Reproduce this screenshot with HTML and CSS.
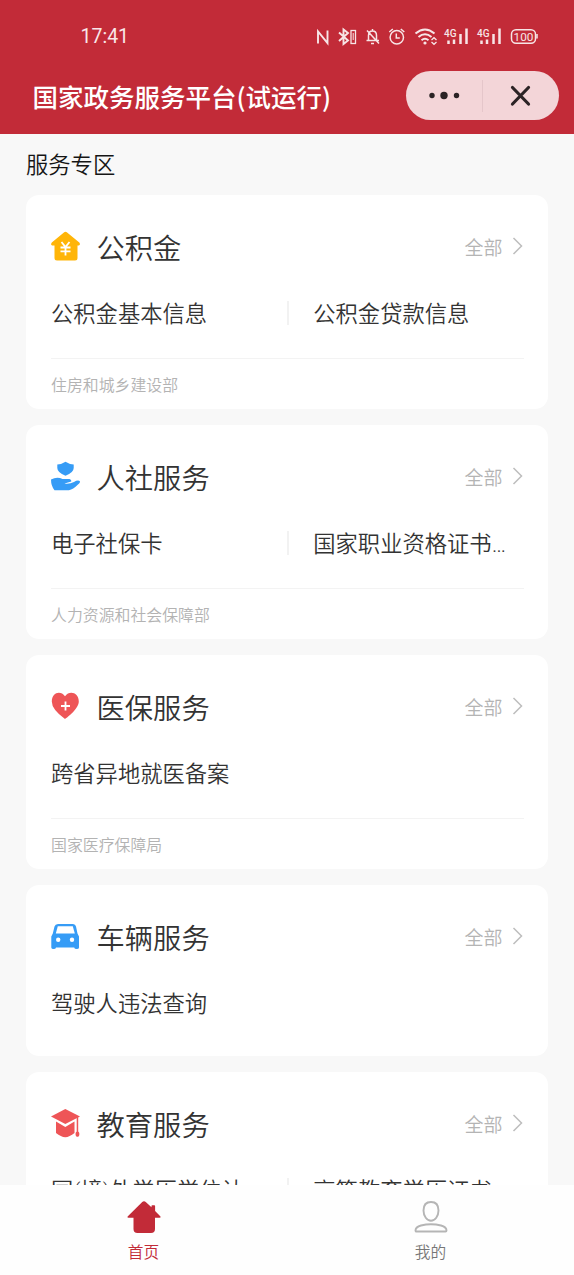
FILE: index.html
```html
<!DOCTYPE html>
<html lang="zh-CN">
<head>
<meta charset="utf-8">
<title>国家政务服务平台</title>
<link rel="stylesheet" href="styles.css">
</head>
<body>
<div class="app">
  <header class="top">
    <div class="status">
      <span class="clock">17:41</span>
      <svg class="status-icons" width="226" height="24" viewBox="314 24 226 24" fill="none" stroke="#fff" stroke-width="1.500">
        <path d="M318 43.500V31.500L327.500 43V30.500" stroke-width="1.900"/>
        <path d="M339 32.500l9 8-4.500 3.500V29.500l4.500 3.500-9 8" stroke-width="1.900"/>
        <rect x="351" y="30.500" width="4.500" height="13" stroke-width="1.300"/><path d="M353.200 33v7" stroke-width="1"/>
        <path d="M366.500 40.500h12.500M368.500 40v-4.500c0-3 2-4.500 4-4.500s4 1.500 4 4.500V40M372.500 29v2M371 43.500h3M367 30.500l12 13"/>
        <circle cx="396.800" cy="37.300" r="6.700"/><path d="M396.300 33.500v4.500h3.500M389.300 32l3.500-3M404.300 32l-3.500-3"/>
        <path d="M415.500 33.500q9.500-8 19 0M418.500 37q6.500-5.500 13 0M421.500 40.200q3.500-3 7 0" stroke-width="2"/>
        <circle cx="425" cy="43" r="1.600" fill="#fff" stroke="none"/>
        <path d="M431.500 40l2.500-2.300 2.500 2.300M431.500 42l2.500 2.300 2.500-2.300" stroke-width="1.300"/>
        <path d="M448.500 40.500V44M454 39.500V44M460.500 34V44M466.500 28.500V44M481.500 40.500V44M487 39.500V44M493.500 34V44M499.500 28.500V44" stroke-width="2.500"/>
        <rect x="511.500" y="29.700" width="24" height="13.500" rx="4.500"/><path d="M537 34v4.500" stroke-width="1.500"/>
        <g class="status-text"><text x="444" y="36.500" font-size="10" font-weight="500">4G</text><text x="477" y="36.500" font-size="10" font-weight="500">4G</text><text x="513.600" y="40.500" font-size="11.800" font-weight="400">100</text></g>
      </svg>
    </div>
    <div class="titlebar">
      <h1>国家政务服务平台(试运行)</h1>
      <div class="capsule">
        <svg width="76" height="48" viewBox="0 0 76 48" fill="#2b2325"><circle cx="26" cy="23.500" r="2.700"/><circle cx="38" cy="23.500" r="3.700"/><circle cx="50.500" cy="23.500" r="2.700"/></svg>
        <i class="capsule-line"></i>
        <svg width="75" height="48" viewBox="0 0 75 48" stroke="#2b2325" stroke-width="3.200" stroke-linecap="round"><path d="M29.500 15.500l16 16.500M45.500 15.500l-16 16.500"/></svg>
      </div>
    </div>
  </header>

  <main class="content">
    <h2 class="section">服务专区</h2>

    <section class="card">
      <div class="head">
        <svg class="icon" width="30" height="32" viewBox="0 0 30 32"><path d="M13.200 1.200q1.300-1.100 2.600 0L28.300 11.600q1.500 2.200-.6 3H26.500V27q0 2.500-2.500 2.500H6Q3.500 29.500 3.500 27V14.600H1.200Q-.8 13.600.8 11.500z" fill="#ffb508"/><path d="M10.500 11l4 5 4-5M14.500 16v8.500M9.500 16.500h10M9.500 20.300h10" fill="none" stroke="#fff" stroke-width="1.800"/></svg>
        <h3>公积金</h3><span class="all">全部</span><svg class="arrow" width="11" height="18" viewBox="0 0 11 18"><path d="M1.500 1l8 8-8 8"/></svg>
      </div>
      <div class="items"><span>公积金基本信息</span><span>公积金贷款信息</span></div>
      <div class="source">住房和城乡建设部</div>
    </section>

    <section class="card">
      <div class="head">
        <svg class="icon" width="30" height="32" viewBox="0 0 30 32" fill="#369cf6"><path d="M14.500.8Q18.500 3.500 22.700 3.500V7q0 4.500-8.200 7.800Q6.300 11.500 6.300 7V3.500Q10.500 3.500 14.500.8z"/><path d="M0 18.500Q6 15.500 11.500 18H18.500q2.200.6 1.800 2.500L13.500 22.500q5 .8 9.500-1.600 3.500-2 5.700-1Q29.800 21.200 27 23.500 22 28.500 18 29.200H3.500Q0 25 0 18.500z"/></svg>
        <h3>人社服务</h3><span class="all">全部</span><svg class="arrow" width="11" height="18" viewBox="0 0 11 18"><path d="M1.500 1l8 8-8 8"/></svg>
      </div>
      <div class="items"><span>电子社保卡</span><span>国家职业资格证书查询</span></div>
      <div class="source">人力资源和社会保障部</div>
    </section>

    <section class="card">
      <div class="head">
        <svg class="icon" width="30" height="32" viewBox="0 0 30 32"><path d="M14 28Q.8 18.500.8 10.500C.8 1.500 9.500-1 14 5.200 18.500-1 27.800 1.500 27.800 10.500 27.800 18.500 14 28 14 28z" fill="#ee5557"/><path d="M14.500 10.500v9M10 15h9" stroke="#fff" stroke-width="1.800"/></svg>
        <h3>医保服务</h3><span class="all">全部</span><svg class="arrow" width="11" height="18" viewBox="0 0 11 18"><path d="M1.500 1l8 8-8 8"/></svg>
      </div>
      <div class="items"><span>跨省异地就医备案</span></div>
      <div class="source">国家医疗保障局</div>
    </section>

    <section class="card card-short">
      <div class="head">
        <svg class="icon" width="30" height="32" viewBox="0 0 30 32"><path d="M7 3H22q2.500 0 3 2.500l1.500 7 1.500 3V26.500q0 1.500-2.300 1.500t-2.500-1.500H5Q4.800 28 2.600 28T.3 26.500V15.500l1.500-3L3.500 5.500Q4.200 3 7 3z" fill="#369cf6"/><path d="M6.800 5.300h15l2 7.200H4.800z" fill="#fff"/><circle cx="7.200" cy="18.800" r="2.200" fill="#fff"/><circle cx="21" cy="18.800" r="2.200" fill="#fff"/></svg>
        <h3>车辆服务</h3><span class="all">全部</span><svg class="arrow" width="11" height="18" viewBox="0 0 11 18"><path d="M1.500 1l8 8-8 8"/></svg>
      </div>
      <div class="items"><span>驾驶人违法查询</span></div>
    </section>

    <section class="card">
      <div class="head">
        <svg class="icon" width="30" height="32" viewBox="0 0 30 32" fill="#ee5557"><path d="M14.300 1L29 8.500 14.300 16 0 8.500z"/><path d="M5 13.500l9.300 5.500L23.500 13.500V25q-5 4-9.200 4.300Q10 29 5 25z"/><path d="M25.700 9h1.500V23.500q1.200.5 1.200 2.500t-1.200 2.800h-1.500q-1.200-.8-1.200-2.800t1.200-2.500z"/></svg>
        <h3>教育服务</h3><span class="all">全部</span><svg class="arrow" width="11" height="18" viewBox="0 0 11 18"><path d="M1.500 1l8 8-8 8"/></svg>
      </div>
      <div class="items"><span>国(境)外学历学位认证查询</span><span>高等教育学历证书查询</span></div>
      <div class="source">教育部</div>
    </section>
  </main>

  <nav class="tabs">
    <div class="tab active">
      <svg width="34" height="34" viewBox="0 0 34 34" fill="#c22b38"><path d="M15 2.200q2-1.900 4 0L24.500 7.300V6q0-.8.800-.8h2q.8 0 .8.800v5L33.500 16.500q.5 1.300-1 1.300H28V29q0 4-4 4H10.500q-4 0-4-4V17.800H1.500Q0 17.800.6 16.500z"/></svg>
      <span>首页</span>
    </div>
    <div class="tab">
      <svg width="34" height="34" viewBox="0 0 34 34" fill="none" stroke="#b5b5b5" stroke-width="1.900"><path d="M17 2C21.500 2 24.500 5 24.500 10.500S21 20.800 17 20.800 9.500 16 9.500 10.500 12.500 2 17 2z"/><path d="M1.500 30.500Q1.500 27 7 25.500 17 23 27 25.500q5.500 1.500 5.500 5 0 1-1 1h-29q-1 0-1-1z" stroke-linejoin="round"/></svg>
      <span>我的</span>
    </div>
  </nav>
</div>
</body>
</html>
```
FILE: styles.css
```css
* { box-sizing: border-box; }
body {
  margin: 0;
  background: #f8f8f8;
  color: #333;
  font-family: "Noto Sans CJK SC", sans-serif;
  font-weight: 350;
}
h1, h2, h3 { margin: 0; font-weight: 350; }
svg { display: block; flex: none; }
.app {
  height: 1275px;
  display: flex;
  flex-direction: column;
  overflow: hidden;
}
.top { flex: none; height: 133.500px; background: #c22b38; color: #fff; }
.status {
  height: 71px;
  padding: 1px 34px 0 80.500px;
  display: flex;
  align-items: center;
  justify-content: space-between;
}
.clock { font: 19.500px Roboto, sans-serif; color: #f9e6e8; }
.status-icons { opacity: .88; }
.status-text { fill: #fff; stroke: none; font-family: Roboto, sans-serif; }
.titlebar {
  height: 49px;
  padding: 0 15.500px 0 32.500px;
  display: flex;
  align-items: center;
  justify-content: space-between;
}
h1 { font-size: 25.500px; font-weight: 500; line-height: 47px; padding-bottom: 1px; white-space: nowrap; }
.capsule {
  width: 152.500px;
  height: 49px;
  border-radius: 25px;
  background: #f3d5d8;
  display: flex;
  align-items: center;
}
.capsule-line { width: 1px; height: 32px; background: #e5c6ca; }
.content { flex: 1; min-height: 0; overflow: hidden; padding: 0 26px; }
.section { height: 61.500px; font-size: 22.300px; line-height: 59px; color: #151515; }
.card {
  height: 214px;
  margin-bottom: 16px;
  padding: 0 24.500px 0 25px;
  border-radius: 13px;
  background: #fff;
}
.card-short { height: 170.500px; }
.head { height: 104px; display: flex; align-items: center; }
.head h3 { margin-left: 15.500px; font-size: 28.300px; line-height: 40px; flex: 1; }
.icon { align-self: flex-start; margin-top: 36px; }
.all { font-size: 19px; line-height: 28px; color: #b4b4b4; }
.arrow { margin: 0 1px 2px 9px; fill: none; stroke: #bdbdbd; stroke-width: 1.500; }
.items {
  height: 28px;
  display: grid;
  grid-template-columns: 1fr 1fr;
  align-items: center;
  font-family: Roboto, "Noto Sans CJK SC", sans-serif;
}
.items span {
  margin: -5px 0;
  padding: 2px 16px 0 0;
  font-size: 22.300px;
  line-height: 36px;
  overflow: hidden;
  white-space: nowrap;
  text-overflow: ellipsis;
}
.items span + span {
  padding: 2px 0 0 26px;
  background: linear-gradient(#f2f2f2, #f2f2f2) 0 50% / 2px 24px no-repeat;
}
.source {
  margin-top: 31px;
  border-top: 1px solid #f3f3f3;
  font-size: 15.900px;
  line-height: 52px;
  color: #b3b3b3;
}
.tabs {
  flex: none;
  height: 90px;
  display: grid;
  grid-template-columns: 1fr 1fr;
  background: #fefefe;
}
.tab {
  padding-top: 14.500px;
  display: flex;
  flex-direction: column;
  align-items: center;
  font-size: 15.700px;
  line-height: 24px;
  color: #777;
}
.tab span { margin-top: 6px; }
.active { color: #c22b38; }
```
